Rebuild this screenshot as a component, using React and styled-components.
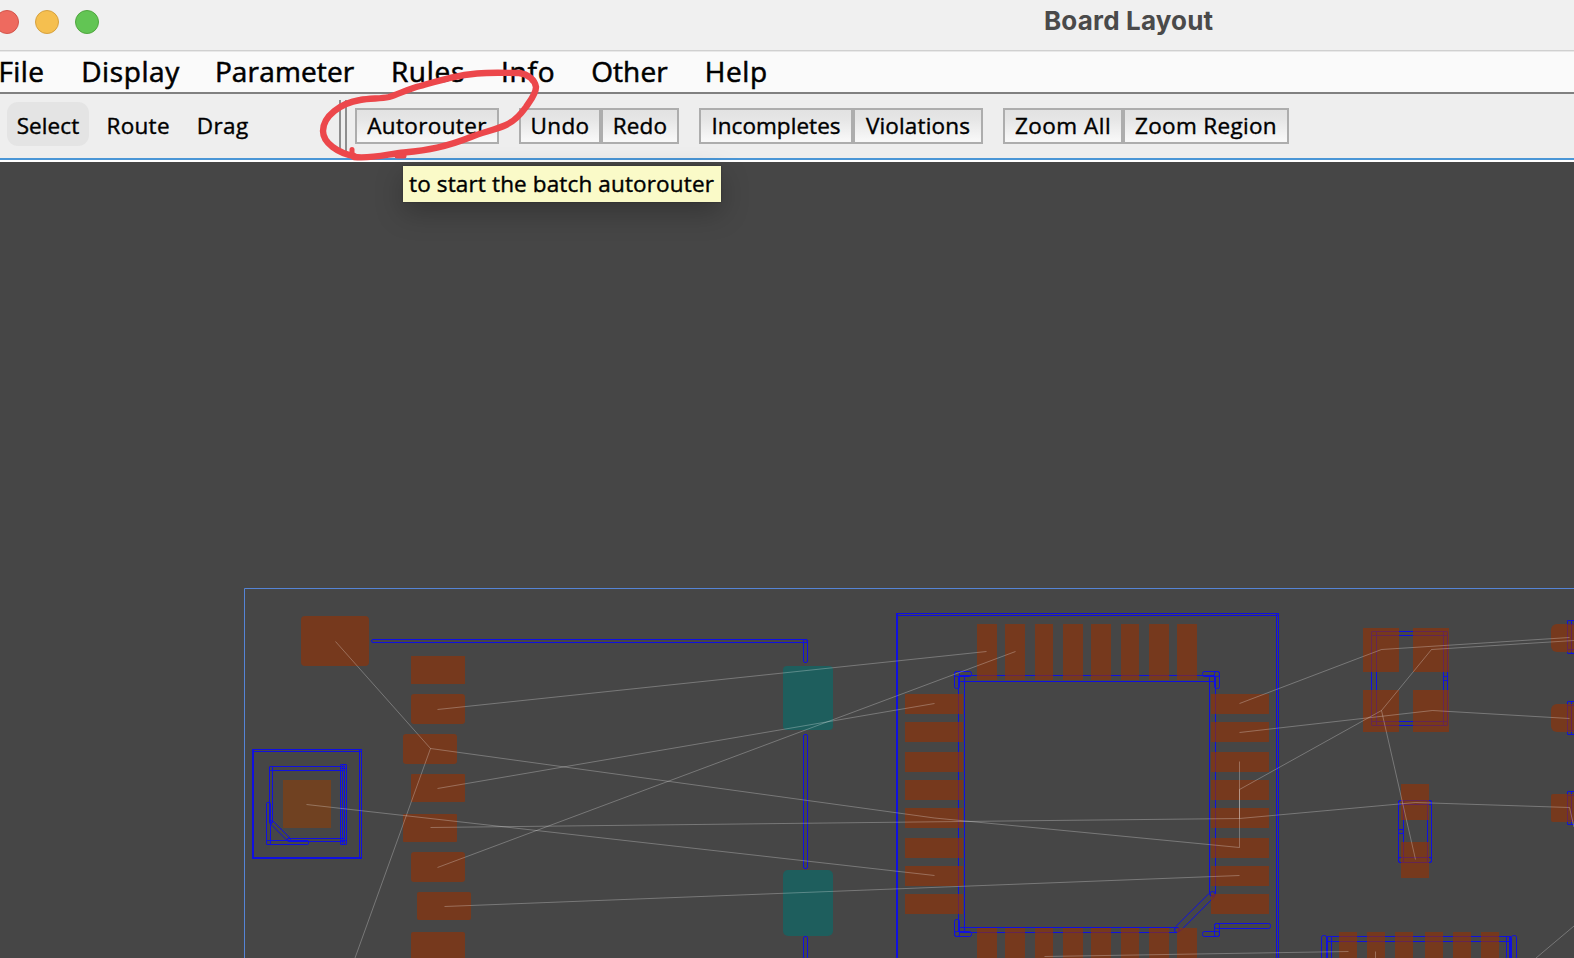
import React from "react";
import styled, { createGlobalStyle } from "styled-components";

const Global = createGlobalStyle`
  * { box-sizing: border-box; }
  html, body { margin: 0; padding: 0; overflow: hidden; background: #464646; }
`;

const Window = styled.div`
  position: relative;
  display: flex;
  flex-direction: column;
  width: 1574px;
  height: 958px;
  overflow: hidden;
  color: #000;
  font-family: "Open Sans", "Noto Sans", sans-serif;
`;

const TitleBar = styled.header`
  display: flex;
  align-items: flex-start;
  flex: none;
  height: 52px;
  background: #f0f0f0;
  border-bottom: 1px solid #e8e8e8;
  box-shadow: inset 0 -1px 0 #d0d0d0;
`;

const Lights = styled.div`
  display: flex;
  gap: 16px;
  flex: none;
  margin: 10px 0 0 -5px;
`;

const Light = styled.span`
  width: 24px;
  height: 24px;
  border-radius: 50%;
  background: ${(p) => p.$fill};
  border: 1px solid ${(p) => p.$edge};
`;

const Title = styled.h1`
  margin: 0 0 0 945px;
  font: 700 26px/41px Inter, sans-serif;
  letter-spacing: 0.17px;
  color: #4a4a4a;
  white-space: nowrap;
`;

const MenuBar = styled.nav`
  display: flex;
  flex: none;
  height: 42px;
  background: #fafafa;
  border-bottom: 2px solid #808080;
`;

const MenuItem = styled.span`
  flex: none;
  width: ${(p) => p.$w}px;
  font-size: 28px;
  line-height: 38px;
  letter-spacing: ${(p) => p.$ls}px;
  white-space: nowrap;
  -webkit-text-stroke: 0.55px #000;
  &:first-child { margin-left: -1.5px; }
`;

const ToolBar = styled.div`
  display: flex;
  flex: none;
  height: 68px;
  background: #eeeeee;
  border-bottom: 2px solid #fff;
  box-shadow: inset 0 -2px 0 #4a96d6;
`;

const Modes = styled.div`
  display: flex;
  align-items: flex-start;
  flex: none;
  width: 339px;
  padding: 8px 0 0 7px;
`;

const Mode = styled.span`
  flex: none;
  width: ${(p) => p.$w}px;
  height: 44px;
  border-radius: 11px;
  background: ${(p) => (p.$on ? "#e4e4e4" : "transparent")};
  font-size: 22.5px;
  line-height: 48px;
  text-align: center;
  letter-spacing: ${(p) => p.$ls}px;
  -webkit-text-stroke: 0.4px #000;
`;

const Grip = styled.span`
  flex: none;
  width: 8px;
  height: 54px;
  margin: 6px 8px 0 0;
  border: solid #8e8e8e;
  border-width: 0 2px;
`;

const Groups = styled.div`
  display: flex;
  gap: 20px;
  margin-top: 14px;
`;

const Group = styled.div`
  display: flex;
`;

const Button = styled.button`
  flex: none;
  width: ${(p) => p.$w}px;
  height: 36px;
  margin: 0;
  padding: 0 0 1px;
  border: 2px solid #adadad;
  border-radius: 0;
  background: linear-gradient(#e2e2e2 0%, #e6e6e6 30%, #f8f8f8 95%);
  color: #000;
  font: 400 22.5px/31px "Open Sans", "Noto Sans", sans-serif;
  letter-spacing: ${(p) => p.$ls}px;
  white-space: nowrap;
  -webkit-text-stroke: 0.4px #000;
`;

const Tooltip = styled.div`
  position: absolute;
  left: 403px;
  top: 166px;
  width: 318px;
  height: 36px;
  padding-left: 6px;
  background: #fafac8;
  font-size: 22.5px;
  line-height: 36px;
  letter-spacing: 0.14px;
  white-space: nowrap;
  -webkit-text-stroke: 0.4px #000;
  box-shadow: 0 10px 28px rgba(0, 0, 0, 0.25), 0 0 2px rgba(0, 0, 0, 0.3);
`;

const Canvas = styled.svg`
  display: block;
  flex: none;
  width: 1574px;
  height: 796px;
  background: #464646;
`;

const Markup = styled.svg`
  position: absolute;
  left: 310px;
  top: 60px;
  width: 240px;
  height: 110px;
  fill: none;
  stroke: #ec474b;
  stroke-width: 6.4;
  stroke-linecap: round;
  stroke-linejoin: round;
`;

const MENU = [
  ["File", 82.7, 0.4], ["Display", 133.7, 0.6], ["Parameter", 176, 0.15],
  ["Rules", 110.1, 0.7], ["Info", 90.2, 0.8], ["Other", 113.6, 0.1], ["Help", 90, 0.6],
];
const MODES = [["Select", 82, 0.1, true], ["Route", 98.4, 0.3], ["Drag", 70.4, 0.4]];
const GROUPS = [
  [["Autorouter", 144, 0.35]],
  [["Undo", 82, 0.4], ["Redo", 78, 0.2]],
  [["Incompletes", 154, 0.05], ["Violations", 130, 0.15]],
  [["Zoom All", 120, 0.5], ["Zoom Region", 166, 0.32]],
];

// Pads: [x, y, width, height, corner radius]
const HEADER_PADS = [
  [301, 616, 68, 50, 4],
  [411, 656, 54, 28, 0], [411, 694, 54, 30, 3], [403, 734, 54, 30, 3],
  [411, 774, 54, 28, 1], [403, 814, 54, 28, 1], [411, 852, 54, 30, 3],
  [417, 892, 54, 28, 2], [411, 932, 54, 40, 2],
];
const IC_COLS = [[977, 20], [1005, 20], [1035, 18], [1063, 20], [1091, 20], [1121, 18], [1149, 20], [1177, 20]];
const IC_ROWS = [694, 722, 752, 780, 808, 838, 866, 894];
const IC_PADS = [
  ...IC_COLS.flatMap(([x, w]) => [[x, 624, w, 56, 0], [x, 928, w, 40, 0]]),
  ...IC_ROWS.flatMap((y) => [[905, y, 58, 20, 0], [1211, y, 58, 20, 0]]),
];
const SIDE_PADS = [
  [1363, 628, 36, 44, 0], [1413, 628, 36, 44, 0], [1363, 690, 36, 42, 0], [1413, 690, 36, 42, 0],
  [1401, 784, 28, 36, 0], [1401, 842, 28, 36, 0],
  [1551, 624, 40, 28, 6], [1551, 704, 40, 28, 6], [1551, 794, 40, 28, 2],
  ...[1339, 1367, 1395, 1425, 1453, 1481].map((x) => [x, 932, 18, 40, 0]),
];
const PADS = [...HEADER_PADS, ...IC_PADS, ...SIDE_PADS];

// Silkscreen segments as outlined strokes: [x1, y1, x2, y2, corner radius]
const TRACES = [
  [371.5, 639.5, 807.5, 642.5, 1.5], [803.5, 639.5, 807.5, 662.5, 1.5],
  [803.5, 734.5, 807.5, 868.5, 1.5], [803.5, 936.5, 807.5, 990.5, 1.5],
  // small module
  [252.5, 749.5, 361.5, 751.5, 0], [252.5, 749.5, 253.5, 858.5, 0],
  [359.5, 749.5, 361.5, 858.5, 0], [252.5, 857.5, 361.5, 858.5, 0],
  [269.5, 766.5, 344.5, 770.5, 1], [269.5, 766.5, 272.5, 822.5, 1],
  [340.5, 764.5, 344.5, 844.5, 1], [342.5, 764.5, 346.5, 844.5, 1],
  [340.5, 764.5, 346.5, 768.5, 1], [340.5, 840.5, 346.5, 844.5, 1],
  [266.5, 802.5, 270.5, 844.5, 1], [266.5, 840.5, 308.5, 844.5, 1],
  [287.5, 838.5, 344.5, 841.5, 1],
  // controller outline
  [896.5, 613.5, 1278.5, 615.5, 0], [896.5, 613.5, 897.5, 990.5, 0],
  [1276.5, 613.5, 1278.5, 990.5, 0],
  [958.5, 675.5, 1215.5, 681.5, 2], [958.5, 675.5, 964.5, 932.5, 2],
  [1209.5, 675.5, 1215.5, 895.5, 2], [958.5, 927.5, 1178.5, 932.5, 2],
  [954.5, 671.5, 971.5, 676.5, 2], [954.5, 671.5, 959.5, 688.5, 2],
  [1202.5, 671.5, 1219.5, 676.5, 2], [1214.5, 671.5, 1219.5, 688.5, 2],
  [954.5, 931.5, 971.5, 936.5, 2], [954.5, 919.5, 959.5, 936.5, 2],
  [1202.5, 931.5, 1219.5, 936.5, 2], [1214.5, 923.5, 1219.5, 936.5, 2],
  [1214.5, 923.5, 1270.5, 928.5, 2],
  // crystal
  [1371.5, 631.5, 1447.5, 635.5, 1], [1371.5, 721.5, 1447.5, 725.5, 1],
  [1371.5, 631.5, 1376.5, 725.5, 1], [1443.5, 631.5, 1447.5, 725.5, 1],
  [1443.5, 676.5, 1447.5, 680.5, 1],
  // capacitor
  [1398.5, 800.5, 1431.5, 804.5, 1.5], [1398.5, 857.5, 1431.5, 862.5, 1.5],
  [1398.5, 800.5, 1403.5, 862.5, 1.5], [1427.5, 800.5, 1431.5, 862.5, 1.5],
  [1398.5, 829.5, 1403.5, 833.5, 1.5],
  // right edge parts
  ...[[620.5, 653.5], [701.5, 734.5], [791.5, 824.5]].flatMap(([a, b]) => [
    [1567.5, a, 1571.5, b, 1], [1567.5, a, 1600, a + 4, 1], [1567.5, b - 4, 1600, b, 1],
  ]),
  // bottom connector
  [1321.5, 935.5, 1326.5, 990.5, 2], [1327.5, 936.5, 1331.5, 990.5, 1],
  [1326.5, 936.5, 1510.5, 941.5, 1], [1506.5, 936.5, 1510.5, 990.5, 1],
  [1509.5, 936.5, 1510.5, 990.5, 0], [1511.5, 935.5, 1516.5, 990.5, 2],
];

const AIRWIRES = [
  "335.5,641.5 430.5,748.5 355,958", "430.5,748.5 934.5,818 1239.5,847.5",
  "437.5,709.5 986.5,651.5", "437.5,788.5 934.5,703.5", "437.5,867.5 1015.5,651.5",
  "430.5,827.5 740,824 1050,820.5 1239.5,818.5 1415.5,802.5 1569.5,807.5 1574,827",
  "444.5,906.5 1239.5,875.5", "306.5,804.5 934.5,875.5",
  "1239.5,761.5 1239.5,847.5", "1239.5,789.5 1239.5,818.5",
  "1239.5,703.5 1381.5,649.5 1569.5,637.5",
  "1239.5,732.5 1432.5,710.5 1569.5,718.5",
  "1239.5,789.5 1381.5,710.5 1431.5,649.5 1574,640.5", "1381.5,710.5 1415.5,859.5",
  "1044.5,956.5 1348.5,951.5", "1375.5,951.5 1375.5,958", "1536,958 1574,926",
];

const Trace = ({ box: [x1, y1, x2, y2, r] }) => (
  <rect x={x1} y={y1} width={x2 - x1} height={y2 - y1} rx={r} />
);

function Board() {
  return (
    <Canvas viewBox="0 162 1574 796">
      <path d="M244.5 960V588.5H1574" fill="none" stroke="#5584d6" />
      <g fill="none" stroke="#1010e0">
        {TRACES.map((t, i) => <Trace key={i} box={t} />)}
        <path d="M269.8 823.2L287 840.4M272.8 820.8L290 838" />
        <circle cx="271" cy="822" r="1.5" />
        <circle cx="289" cy="839.5" r="1.5" />
        <path d="M1175.5 926.8L1208.7 893.8M1179.5 931.8L1215 896.2" />
        <circle cx="1212.5" cy="894" r="2.6" />
        <circle cx="1177" cy="930" r="2.6" />
      </g>
      <g fill="rgba(145,51,8,0.65)">
        {PADS.map(([x, y, w, h, r], i) => <rect key={i} x={x} y={y} width={w} height={h} rx={r} />)}
      </g>
      <rect x="283" y="780" width="48" height="48" fill="#704121" />
      <g fill="#1e5e5d">
        <rect x="783" y="666" width="50" height="64" rx="4" />
        <rect x="783" y="870" width="50" height="66" rx="5" />
      </g>
      <g fill="none" stroke="#fff" strokeOpacity="0.27">
        {AIRWIRES.map((p) => <polyline key={p} points={p} />)}
      </g>
    </Canvas>
  );
}

export default function App() {
  return (
    <Window>
      <Global />
      <TitleBar>
        <Lights>
          <Light $fill="#ee6a5f" $edge="#d3554b" />
          <Light $fill="#f5bf4f" $edge="#d6a13f" />
          <Light $fill="#62c554" $edge="#50a63f" />
        </Lights>
        <Title>Board Layout</Title>
      </TitleBar>
      <MenuBar>
        {MENU.map(([t, w, ls]) => <MenuItem key={t} $w={w} $ls={ls}>{t}</MenuItem>)}
      </MenuBar>
      <ToolBar>
        <Modes>
          {MODES.map(([t, w, ls, on]) => <Mode key={t} $w={w} $ls={ls} $on={on}>{t}</Mode>)}
        </Modes>
        <Grip />
        <Groups>
          {GROUPS.map((g) => (
            <Group key={g[0][0]}>
              {g.map(([t, w, ls]) => <Button key={t} $w={w} $ls={ls}>{t}</Button>)}
            </Group>
          ))}
        </Groups>
      </ToolBar>
      <Board />
      <Tooltip>to start the batch autorouter</Tooltip>
      <Markup viewBox="310 60 240 110">
        <path d="M354 156C338 153 323 143 323 131C323 116 341 103 360 100C371 98 380 99 389 97C399 94 408 89 420 86C441 80 457 75 477 73.500C493 72 507 73 519 73C528 74 535 80 536 87C536 94 530 101 526 107C521 114 515 121 506 125C495 130 483 132 471 137C446 147 428 150 404 152.500C388 154 372 159 354 157" />
        <path d="M352 149.500V154" strokeWidth="5" />
        <path d="M397 156H404" strokeWidth="5" />
      </Markup>
    </Window>
  );
}
